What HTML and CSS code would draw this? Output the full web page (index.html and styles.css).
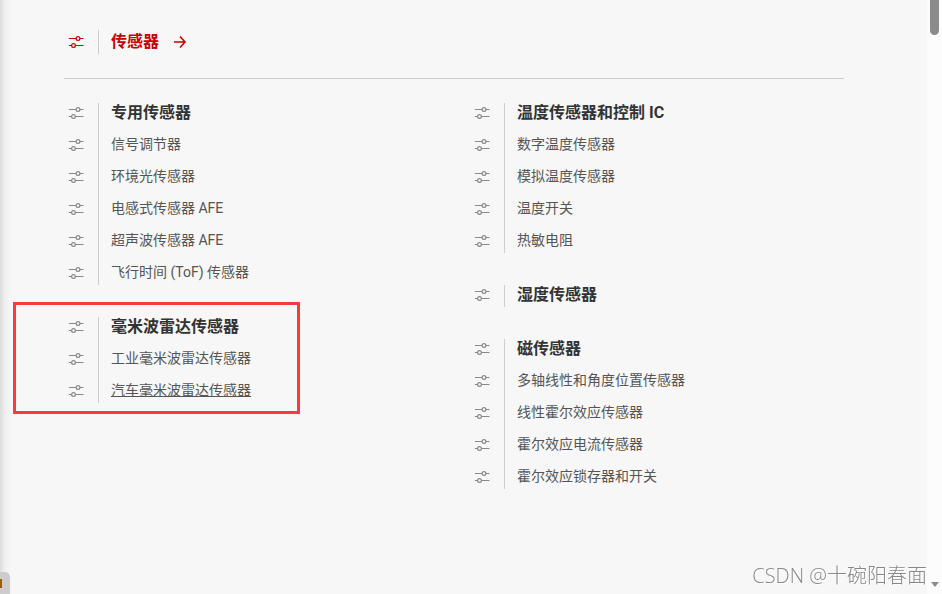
FILE: index.html
```html
<!DOCTYPE html>
<html lang="zh-CN">
<head>
    <meta charset="UTF-8">
    <meta name="viewport" content="width=device-width, initial-scale=1.0">
    <title>传感器</title>
    <link rel="stylesheet" href="styles.css">
</head>
<body>
    <svg class="sprite" aria-hidden="true">
        <symbol id="sliders" viewBox="0 0 24 20">
            <path d="M4.800 6.500H12M16 6.500H19.500M4.800 13.500H7.500M11.500 13.500H19.500"/>
            <circle cx="14" cy="6.500" r="1.900"/>
            <circle cx="9.500" cy="13.500" r="1.900"/>
        </symbol>
    </svg>

    <main class="panel">
        <header class="panel-head">
            <svg class="icon"><use href="#sliders"/></svg>
            <a href="#sensors" class="panel-title">传感器
                <svg class="arrow" viewBox="0 0 14 14"><path d="M1 7H12M7 1.500L12 7L7 12.500"/></svg>
            </a>
        </header>

        <div class="columns">
            <div class="column">
                <ul class="group">
                    <li><svg class="icon"><use href="#sliders"/></svg><a href="#" class="heading">专用传感器</a></li>
                    <li><svg class="icon"><use href="#sliders"/></svg><a href="#">信号调节器</a></li>
                    <li><svg class="icon"><use href="#sliders"/></svg><a href="#">环境光传感器</a></li>
                    <li><svg class="icon"><use href="#sliders"/></svg><a href="#">电感式传感器 AFE</a></li>
                    <li><svg class="icon"><use href="#sliders"/></svg><a href="#">超声波传感器 AFE</a></li>
                    <li><svg class="icon"><use href="#sliders"/></svg><a href="#">飞行时间 (ToF) 传感器</a></li>
                </ul>
                <ul class="group marked">
                    <li><svg class="icon"><use href="#sliders"/></svg><a href="#" class="heading">毫米波雷达传感器</a></li>
                    <li><svg class="icon"><use href="#sliders"/></svg><a href="#">工业毫米波雷达传感器</a></li>
                    <li><svg class="icon"><use href="#sliders"/></svg><a href="#" class="current">汽车毫米波雷达传感器</a></li>
                </ul>
            </div>

            <div class="column">
                <ul class="group">
                    <li><svg class="icon"><use href="#sliders"/></svg><a href="#" class="heading">温度传感器和控制 IC</a></li>
                    <li><svg class="icon"><use href="#sliders"/></svg><a href="#">数字温度传感器</a></li>
                    <li><svg class="icon"><use href="#sliders"/></svg><a href="#">模拟温度传感器</a></li>
                    <li><svg class="icon"><use href="#sliders"/></svg><a href="#">温度开关</a></li>
                    <li><svg class="icon"><use href="#sliders"/></svg><a href="#">热敏电阻</a></li>
                </ul>
                <ul class="group">
                    <li><svg class="icon"><use href="#sliders"/></svg><a href="#" class="heading">湿度传感器</a></li>
                </ul>
                <ul class="group">
                    <li><svg class="icon"><use href="#sliders"/></svg><a href="#" class="heading">磁传感器</a></li>
                    <li><svg class="icon"><use href="#sliders"/></svg><a href="#">多轴线性和角度位置传感器</a></li>
                    <li><svg class="icon"><use href="#sliders"/></svg><a href="#">线性霍尔效应传感器</a></li>
                    <li><svg class="icon"><use href="#sliders"/></svg><a href="#">霍尔效应电流传感器</a></li>
                    <li><svg class="icon"><use href="#sliders"/></svg><a href="#">霍尔效应锁存器和开关</a></li>
                </ul>
            </div>
        </div>
    </main>

    <div class="scrollbar" aria-hidden="true">
        <div class="thumb"></div>
        <div class="down"></div>
    </div>

    <div class="corner-tab"></div>
    <div class="watermark">CSDN @十碗阳春面</div>
</body>
</html>
```

FILE: styles.css
```css
:root {
    --red: #cc0000;
    --mark: #ff3838;
    --line: #cccccc;
    --bg: #f7f7f7;
}

* {
    box-sizing: border-box;
}

body {
    margin: 0;
    display: flex;
    min-height: 100vh;
    background: var(--bg);
    color: #555;
    font: 14px/18px Roboto, "Noto Sans CJK SC", sans-serif;
}

a {
    color: inherit;
    text-decoration: none;
}

.sprite {
    position: absolute;
    width: 0;
    height: 0;
}

.icon {
    flex: none;
    width: 24px;
    height: 20px;
    margin-right: 10px;
    fill: none;
    stroke: #888;
    stroke-width: 1.2;
}

/* MENU PANEL */
.panel {
    flex: 1;
    padding: 30px 83px 30px 64px;
    background: linear-gradient(to right, #dcdcdc, #f0f0f0 5px, var(--bg) 12px);
}

.panel-head {
    display: flex;
    align-items: center;
    padding-bottom: 24px;
    border-bottom: 1px solid var(--line);
}

.panel-head .icon {
    stroke: var(--red);
}

.panel-title {
    display: flex;
    align-items: center;
    gap: 14px;
    padding-left: 12px;
    border-left: 1px solid var(--line);
    color: var(--red);
    font-size: 16px;
    font-weight: 700;
    line-height: 24px;
}

.arrow {
    width: 14px;
    height: 14px;
    fill: none;
    stroke: var(--red);
    stroke-width: 1.6;
}

.columns {
    display: grid;
    grid-template-columns: 1fr 1fr;
    gap: 32px;
    padding-top: 24px;
}

.column {
    display: flex;
    flex-direction: column;
    gap: 32px;
}

.group {
    position: relative;
    margin: 0;
    padding: 0;
    list-style: none;
}

.group li {
    display: flex;
    align-items: flex-start;
    height: 32px;
}

.group li:last-child {
    height: 22px;
}

.group a {
    height: 100%;
    padding-left: 12px;
    border-left: 1px solid var(--line);
}

.group a:hover,
.group .current {
    text-decoration: underline;
}

.group .heading {
    color: #333;
    font-size: 16px;
    font-weight: 700;
    line-height: 20px;
}

/* red frame around the radar group */
.marked::after {
    content: "";
    position: absolute;
    top: -15px;
    right: 138px;
    bottom: -11px;
    left: -51px;
    border: 3px solid var(--mark);
    pointer-events: none;
}

/* SCROLLBAR */
.scrollbar {
    display: flex;
    flex-direction: column;
    justify-content: space-between;
    align-items: center;
    width: 15px;
    padding-bottom: 7px;
    background: #fcfcfc;
}

.thumb {
    width: 9px;
    height: 35px;
    border-radius: 0 0 5px 5px;
    background: #8b8b8b;
}

.down {
    border: 4px solid transparent;
    border-top: 5px solid #8b8b8b;
    border-bottom: 0;
}

.corner-tab {
    position: fixed;
    left: 0;
    bottom: 0;
    width: 10px;
    height: 22px;
    border-radius: 0 5px 0 0;
    background: linear-gradient(#a85b00, #a85b00) 0 7px / 2px 9px no-repeat #cdcdcd;
}

.watermark {
    position: fixed;
    right: 15px;
    bottom: 3px;
    color: #888;
    font-family: "Open Sans", "Noto Sans CJK SC", sans-serif;
    font-size: 20px;
    font-weight: 300;
    line-height: 30px;
    text-shadow: 1px 1px 0 #fff;
}
```
